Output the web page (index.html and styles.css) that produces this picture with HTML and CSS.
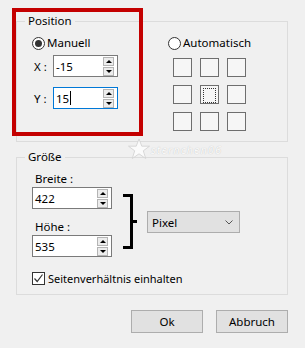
FILE: index.html
```html
<!DOCTYPE html>
<html lang="de">
<head>
    <meta charset="UTF-8">
    <meta name="viewport" content="width=device-width, initial-scale=1.0">
    <title>Position</title>
    <link rel="stylesheet" href="styles.css">
</head>
<body>
    <div class="dialog">
        <div class="group pos">
            <span class="legend">Position</span>
            <div class="pos-body">
                <div class="col-left">
                    <div class="radio"><span class="dot on"></span>Manuell</div>
                    <div class="field">
                        <span class="lbl">X :</span>
                        <div class="spin">
                            <span class="val">-15</span>
                            <span class="arrows"><i class="up"></i><i class="down"></i></span>
                        </div>
                    </div>
                    <div class="field">
                        <span class="lbl">Y :</span>
                        <div class="spin focus">
                            <span class="val">15<b class="caret"></b></span>
                            <span class="arrows"><i class="up"></i><i class="down"></i></span>
                        </div>
                    </div>
                </div>
                <div class="col-right">
                    <div class="radio"><span class="dot"></span>Automatisch</div>
                    <div class="grid">
                        <span class="cell"></span><span class="cell"></span><span class="cell"></span>
                        <span class="cell"></span><span class="cell current"></span><span class="cell"></span>
                        <span class="cell"></span><span class="cell"></span><span class="cell"></span>
                    </div>
                </div>
            </div>
        </div>

        <div class="group size">
            <span class="legend">Größe</span>
            <div class="size-body">
                <div class="size-row">
                    <div class="col-size">
                        <div class="cap">Breite :</div>
                        <div class="spin wide">
                            <span class="val">422</span>
                            <span class="arrows"><i class="up"></i><i class="down"></i></span>
                        </div>
                        <div class="cap second">Höhe :</div>
                        <div class="spin wide">
                            <span class="val">535</span>
                            <span class="arrows"><i class="up"></i><i class="down"></i></span>
                        </div>
                    </div>
                    <svg class="bracket" width="15" height="55" viewBox="0 0 15 55">
                        <path d="M0 1.5H8.5V53.5H0M8.5 27.5H14" fill="none" stroke="#000" stroke-width="3"/>
                    </svg>
                    <div class="select">
                        <span>Pixel</span>
                        <svg width="8" height="5" viewBox="0 0 8 5"><path d="M0.5 0.5L4 4L7.5 0.5" fill="none" stroke="#555" stroke-width="1"/></svg>
                    </div>
                </div>
                <div class="check">
                    <span class="box">
                        <svg width="11" height="11" viewBox="0 0 11 11"><path d="M1.5 5.5L4.2 8.5L9.5 1.5" fill="none" stroke="#333" stroke-width="1.2"/></svg>
                    </span>
                    Seitenverhältnis einhalten
                </div>
            </div>
        </div>

        <div class="buttons">
            <button class="btn">Ok</button>
            <button class="btn">Abbruch</button>
        </div>

        <!-- Markierung und Wasserzeichen liegen über dem Dialog -->
        <div class="mark"></div>
        <div class="watermark">
            <svg width="24" height="22" viewBox="0 0 24 22"><path d="M12 1L14.8 8.2H22.5L16.3 12.8L18.7 20.5L12 15.8L5.3 20.5L7.7 12.8L1.5 8.2H9.2Z" fill="#fbfbfb" stroke="#cfcfcf" stroke-width="0.8"/></svg>
            <span>sternchen06</span>
        </div>
    </div>
</body>
</html>
```

FILE: styles.css
```css
* {
    margin: 0;
    padding: 0;
    box-sizing: border-box;
}

body {
    font-family: 'Noto Sans', 'Liberation Sans', sans-serif;
    font-size: 11px;
    color: #000;
    background: #f0f0f0;
}

.dialog {
    position: relative;
    width: 305px;
    height: 348px;
    padding: 21px 17px 0 16px;
}

.group {
    position: relative;
    border: 1px solid #dcdcdc;
}

.legend {
    position: absolute;
    top: -9px;
    left: 8px;
    padding: 0 3px;
    line-height: 16px;
    font-size: 11.5px;
    background: #f0f0f0;
}

.pos {
    height: 121px;
}

.pos-body {
    display: flex;
    padding: 15px 0 0 15px;
}

.col-left {
    width: 86px;
}

.col-right {
    margin-left: 50px;
}

.radio {
    display: flex;
    align-items: center;
    height: 12px;
    line-height: 12px;
    font-size: 11.5px;
}

.dot {
    width: 13px;
    height: 13px;
    margin-right: 2px;
    border: 1px solid #333;
    border-radius: 50%;
    background: #fff;
    display: flex;
    align-items: center;
    justify-content: center;
}

.dot.on::after {
    content: '';
    width: 7px;
    height: 7px;
    border-radius: 50%;
    background: #333;
}

.field {
    display: flex;
    align-items: center;
    margin-top: 6px;
}

.field + .field {
    margin-top: 10px;
}

.lbl {
    width: 21px;
    padding-left: 2px;
    font-size: 11.5px;
}

.spin {
    position: relative;
    display: flex;
    align-items: center;
    width: 65px;
    height: 22px;
    padding-left: 2px;
    font-size: 11.5px;
    border: 1px solid #7a7a7a;
    background: #fff;
}

.spin.focus {
    border-color: #0078d7;
}

.spin.wide {
    width: 80px;
}

.val {
    display: flex;
    align-items: center;
}

.caret {
    width: 1px;
    height: 14px;
    margin-left: 1px;
    background: #000;
}

.arrows {
    position: absolute;
    right: 3px;
    top: 1px;
    display: flex;
    flex-direction: column;
    gap: 1px;
}

.arrows i {
    display: flex;
    align-items: center;
    justify-content: center;
    width: 11px;
    height: 9px;
    border: 1px solid #b4b4b4;
    background: #ececec;
}

.arrows i::after {
    content: '';
    border-left: 3px solid transparent;
    border-right: 3px solid transparent;
}

.arrows .up::after {
    border-bottom: 3px solid #000;
}

.arrows .down::after {
    border-top: 3px solid #000;
}

.grid {
    display: grid;
    grid-template-columns: repeat(3, 19px);
    grid-auto-rows: 19px;
    gap: 8px;
    margin: 9px 0 0 5px;
}

.cell {
    border: 1px solid #6e6e6e;
    background: #f6f6f6;
}

.cell.current {
    padding: 2px;
}

.cell.current::after {
    content: '';
    display: block;
    height: 100%;
    border: 1px dotted #333;
}

.size {
    height: 138px;
    margin-top: 15px;
}

.size-body {
    padding: 13px 0 0 15px;
}

.size-row {
    display: flex;
    align-items: flex-start;
}

.cap {
    padding-left: 3px;
    line-height: 16px;
    font-size: 11.5px;
}

.cap.second {
    margin-top: 10px;
}

.bracket {
    margin: 23px 0 0 11px;
}

.select {
    display: flex;
    align-items: center;
    justify-content: space-between;
    width: 93px;
    height: 22px;
    margin: 40px 0 0 9px;
    padding: 0 6px 0 4px;
    font-size: 11.5px;
    border: 1px solid #adadad;
    background: #e1e1e1;
}

.check {
    display: flex;
    align-items: center;
    height: 14px;
    margin-top: 14px;
}

.box {
    display: flex;
    align-items: center;
    justify-content: center;
    width: 13px;
    height: 13px;
    margin-right: 3px;
    border: 1px solid #333;
    background: #fff;
}

.buttons {
    display: flex;
    justify-content: flex-end;
    gap: 13px;
    margin-top: 15px;
}

.btn {
    width: 72px;
    height: 23px;
    font-family: inherit;
    font-size: 11.5px;
    color: #000;
    border: 1px solid #adadad;
    background: #e1e1e1;
}

.mark {
    position: absolute;
    left: 12px;
    top: 8px;
    width: 131px;
    height: 128px;
    border: 4px solid #c40000;
}

.watermark {
    position: absolute;
    left: 127px;
    top: 138px;
    display: flex;
    align-items: center;
}

.watermark span {
    font-size: 11px;
    font-style: italic;
    letter-spacing: 1px;
    color: #fafafa;
    text-shadow: 0 0 1px #b8b8b8;
}
```
